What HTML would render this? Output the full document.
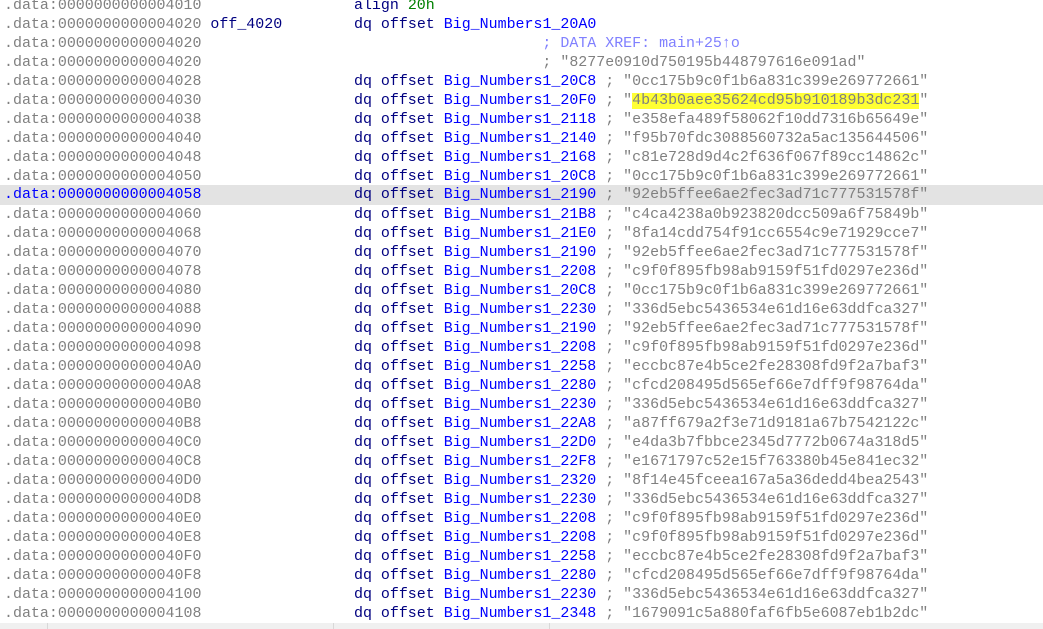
<!DOCTYPE html>
<html><head><meta charset="utf-8"><style>
html,body{margin:0;padding:0;background:#fff;width:1043px;height:629px;overflow:hidden;position:relative}
.l{position:absolute;left:0;width:1043px;height:19px;line-height:19px;font-family:"Liberation Mono",monospace;font-size:14.96px;white-space:pre;padding-left:4px;box-sizing:border-box;color:#808080;margin-top:1px}
.sel{background:#e3e3e3;margin-top:0;line-height:21px;height:20px}
.a{color:#808080}.sel .a{color:#0000ff}
.n{color:#000080}.b{color:#0000ff}.g{color:#008000}.c{color:#8080ff}
.h{background:#ffff33}
.bar{position:absolute;left:0;top:623px;width:1043px;height:6px;background:#f0f0f0}
.sep{position:absolute;top:623px;width:1px;height:6px;background:#d8d8d8}
</style></head><body>
<div class="l" style="top:-4.5px"><span class="a">.data:0000000000004010</span>                 <span class="n">align</span> <span class="g">20h</span></div>
<div class="l" style="top:14.5px"><span class="a">.data:0000000000004020</span> <span class="n">off_4020</span>        <span class="n">dq offset</span> <span class="b">Big_Numbers1_20A0</span></div>
<div class="l" style="top:33.5px"><span class="a">.data:0000000000004020</span>                                      <span class="c">; DATA XREF: main+25↑o</span></div>
<div class="l" style="top:52.5px"><span class="a">.data:0000000000004020</span>                                      ; "8277e0910d750195b448797616e091ad"</div>
<div class="l" style="top:71.5px"><span class="a">.data:0000000000004028</span>                 <span class="n">dq offset</span> <span class="b">Big_Numbers1_20C8</span> ; "0cc175b9c0f1b6a831c399e269772661"</div>
<div class="l" style="top:90.5px"><span class="a">.data:0000000000004030</span>                 <span class="n">dq offset</span> <span class="b">Big_Numbers1_20F0</span> ; "<span class="h">4b43b0aee35624cd95b910189b3dc231</span>"</div>
<div class="l" style="top:109.5px"><span class="a">.data:0000000000004038</span>                 <span class="n">dq offset</span> <span class="b">Big_Numbers1_2118</span> ; "e358efa489f58062f10dd7316b65649e"</div>
<div class="l" style="top:128.5px"><span class="a">.data:0000000000004040</span>                 <span class="n">dq offset</span> <span class="b">Big_Numbers1_2140</span> ; "f95b70fdc3088560732a5ac135644506"</div>
<div class="l" style="top:147.5px"><span class="a">.data:0000000000004048</span>                 <span class="n">dq offset</span> <span class="b">Big_Numbers1_2168</span> ; "c81e728d9d4c2f636f067f89cc14862c"</div>
<div class="l" style="top:166.5px"><span class="a">.data:0000000000004050</span>                 <span class="n">dq offset</span> <span class="b">Big_Numbers1_20C8</span> ; "0cc175b9c0f1b6a831c399e269772661"</div>
<div class="l sel" style="top:184.5px"><span class="a">.data:0000000000004058</span>                 <span class="n">dq offset</span> <span class="b">Big_Numbers1_2190</span> ; "92eb5ffee6ae2fec3ad71c777531578f"</div>
<div class="l" style="top:204.5px"><span class="a">.data:0000000000004060</span>                 <span class="n">dq offset</span> <span class="b">Big_Numbers1_21B8</span> ; "c4ca4238a0b923820dcc509a6f75849b"</div>
<div class="l" style="top:223.5px"><span class="a">.data:0000000000004068</span>                 <span class="n">dq offset</span> <span class="b">Big_Numbers1_21E0</span> ; "8fa14cdd754f91cc6554c9e71929cce7"</div>
<div class="l" style="top:242.5px"><span class="a">.data:0000000000004070</span>                 <span class="n">dq offset</span> <span class="b">Big_Numbers1_2190</span> ; "92eb5ffee6ae2fec3ad71c777531578f"</div>
<div class="l" style="top:261.5px"><span class="a">.data:0000000000004078</span>                 <span class="n">dq offset</span> <span class="b">Big_Numbers1_2208</span> ; "c9f0f895fb98ab9159f51fd0297e236d"</div>
<div class="l" style="top:280.5px"><span class="a">.data:0000000000004080</span>                 <span class="n">dq offset</span> <span class="b">Big_Numbers1_20C8</span> ; "0cc175b9c0f1b6a831c399e269772661"</div>
<div class="l" style="top:299.5px"><span class="a">.data:0000000000004088</span>                 <span class="n">dq offset</span> <span class="b">Big_Numbers1_2230</span> ; "336d5ebc5436534e61d16e63ddfca327"</div>
<div class="l" style="top:318.5px"><span class="a">.data:0000000000004090</span>                 <span class="n">dq offset</span> <span class="b">Big_Numbers1_2190</span> ; "92eb5ffee6ae2fec3ad71c777531578f"</div>
<div class="l" style="top:337.5px"><span class="a">.data:0000000000004098</span>                 <span class="n">dq offset</span> <span class="b">Big_Numbers1_2208</span> ; "c9f0f895fb98ab9159f51fd0297e236d"</div>
<div class="l" style="top:356.5px"><span class="a">.data:00000000000040A0</span>                 <span class="n">dq offset</span> <span class="b">Big_Numbers1_2258</span> ; "eccbc87e4b5ce2fe28308fd9f2a7baf3"</div>
<div class="l" style="top:375.5px"><span class="a">.data:00000000000040A8</span>                 <span class="n">dq offset</span> <span class="b">Big_Numbers1_2280</span> ; "cfcd208495d565ef66e7dff9f98764da"</div>
<div class="l" style="top:394.5px"><span class="a">.data:00000000000040B0</span>                 <span class="n">dq offset</span> <span class="b">Big_Numbers1_2230</span> ; "336d5ebc5436534e61d16e63ddfca327"</div>
<div class="l" style="top:413.5px"><span class="a">.data:00000000000040B8</span>                 <span class="n">dq offset</span> <span class="b">Big_Numbers1_22A8</span> ; "a87ff679a2f3e71d9181a67b7542122c"</div>
<div class="l" style="top:432.5px"><span class="a">.data:00000000000040C0</span>                 <span class="n">dq offset</span> <span class="b">Big_Numbers1_22D0</span> ; "e4da3b7fbbce2345d7772b0674a318d5"</div>
<div class="l" style="top:451.5px"><span class="a">.data:00000000000040C8</span>                 <span class="n">dq offset</span> <span class="b">Big_Numbers1_22F8</span> ; "e1671797c52e15f763380b45e841ec32"</div>
<div class="l" style="top:470.5px"><span class="a">.data:00000000000040D0</span>                 <span class="n">dq offset</span> <span class="b">Big_Numbers1_2320</span> ; "8f14e45fceea167a5a36dedd4bea2543"</div>
<div class="l" style="top:489.5px"><span class="a">.data:00000000000040D8</span>                 <span class="n">dq offset</span> <span class="b">Big_Numbers1_2230</span> ; "336d5ebc5436534e61d16e63ddfca327"</div>
<div class="l" style="top:508.5px"><span class="a">.data:00000000000040E0</span>                 <span class="n">dq offset</span> <span class="b">Big_Numbers1_2208</span> ; "c9f0f895fb98ab9159f51fd0297e236d"</div>
<div class="l" style="top:527.5px"><span class="a">.data:00000000000040E8</span>                 <span class="n">dq offset</span> <span class="b">Big_Numbers1_2208</span> ; "c9f0f895fb98ab9159f51fd0297e236d"</div>
<div class="l" style="top:546.5px"><span class="a">.data:00000000000040F0</span>                 <span class="n">dq offset</span> <span class="b">Big_Numbers1_2258</span> ; "eccbc87e4b5ce2fe28308fd9f2a7baf3"</div>
<div class="l" style="top:565.5px"><span class="a">.data:00000000000040F8</span>                 <span class="n">dq offset</span> <span class="b">Big_Numbers1_2280</span> ; "cfcd208495d565ef66e7dff9f98764da"</div>
<div class="l" style="top:584.5px"><span class="a">.data:0000000000004100</span>                 <span class="n">dq offset</span> <span class="b">Big_Numbers1_2230</span> ; "336d5ebc5436534e61d16e63ddfca327"</div>
<div class="l" style="top:603.5px"><span class="a">.data:0000000000004108</span>                 <span class="n">dq offset</span> <span class="b">Big_Numbers1_2348</span> ; "1679091c5a880faf6fb5e6087eb1b2dc"</div>
<div class="bar"></div>
<div class="sep" style="left:47px"></div>
<div class="sep" style="left:333px"></div>
<div class="sep" style="left:549px"></div>
</body></html>
